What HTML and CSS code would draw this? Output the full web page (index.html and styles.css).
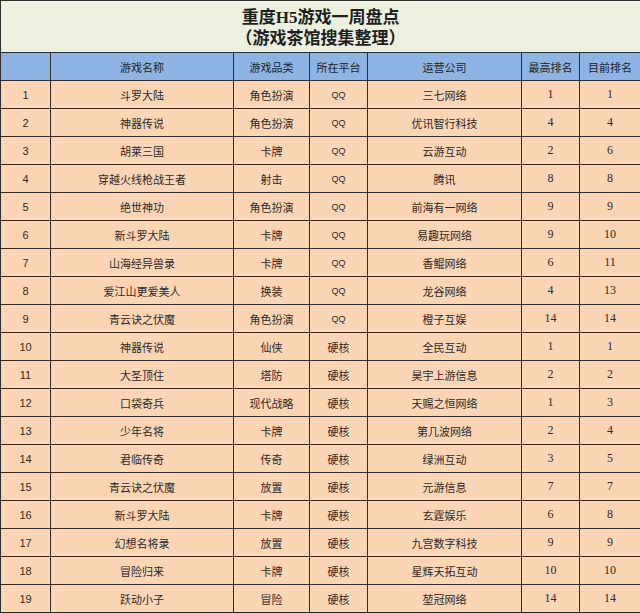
FILE: index.html
```html
<!DOCTYPE html>
<html lang="zh-CN">
<head>
<meta charset="utf-8">
<title>重度H5游戏一周盘点</title>
<link rel="stylesheet" href="styles.css">
</head>
<body>
<table class="sheet">
  <colgroup>
    <col class="c-no"><col class="c-name"><col class="c-type"><col class="c-plat"><col class="c-corp"><col class="c-best"><col class="c-now">
  </colgroup>
  <thead>
    <tr class="title-row"><th colspan="7" class="title">重度H5游戏一周盘点<br>（游戏茶馆搜集整理）</th></tr>
    <tr class="head-row"><th></th><th>游戏名称</th><th>游戏品类</th><th>所在平台</th><th>运营公司</th><th>最高排名</th><th>目前排名</th></tr>
  </thead>
  <tbody>
    <tr><td class="no">1</td><td>斗罗大陆</td><td>角色扮演</td><td class="qq">QQ</td><td>三七网络</td><td class="num">1</td><td class="num">1</td></tr>
    <tr><td class="no">2</td><td>神器传说</td><td>角色扮演</td><td class="qq">QQ</td><td>优讯智行科技</td><td class="num">4</td><td class="num">4</td></tr>
    <tr><td class="no">3</td><td>胡莱三国</td><td>卡牌</td><td class="qq">QQ</td><td>云游互动</td><td class="num">2</td><td class="num">6</td></tr>
    <tr><td class="no">4</td><td>穿越火线枪战王者</td><td>射击</td><td class="qq">QQ</td><td>腾讯</td><td class="num">8</td><td class="num">8</td></tr>
    <tr><td class="no">5</td><td>绝世神功</td><td>角色扮演</td><td class="qq">QQ</td><td>前海有一网络</td><td class="num">9</td><td class="num">9</td></tr>
    <tr><td class="no">6</td><td>新斗罗大陆</td><td>卡牌</td><td class="qq">QQ</td><td>易趣玩网络</td><td class="num">9</td><td class="num">10</td></tr>
    <tr><td class="no">7</td><td>山海经异兽录</td><td>卡牌</td><td class="qq">QQ</td><td>香鲲网络</td><td class="num">6</td><td class="num">11</td></tr>
    <tr><td class="no">8</td><td>爱江山更爱美人</td><td>换装</td><td class="qq">QQ</td><td>龙谷网络</td><td class="num">4</td><td class="num">13</td></tr>
    <tr><td class="no">9</td><td>青云诀之伏魔</td><td>角色扮演</td><td class="qq">QQ</td><td>橙子互娱</td><td class="num">14</td><td class="num">14</td></tr>
    <tr><td class="no">10</td><td>神器传说</td><td>仙侠</td><td>硬核</td><td>全民互动</td><td class="num">1</td><td class="num">1</td></tr>
    <tr><td class="no">11</td><td>大圣顶住</td><td>塔防</td><td>硬核</td><td>昊宇上游信息</td><td class="num">2</td><td class="num">2</td></tr>
    <tr><td class="no">12</td><td>口袋奇兵</td><td>现代战略</td><td>硬核</td><td>天赐之恒网络</td><td class="num">1</td><td class="num">3</td></tr>
    <tr><td class="no">13</td><td>少年名将</td><td>卡牌</td><td>硬核</td><td>第几波网络</td><td class="num">2</td><td class="num">4</td></tr>
    <tr><td class="no">14</td><td>君临传奇</td><td>传奇</td><td>硬核</td><td>绿洲互动</td><td class="num">3</td><td class="num">5</td></tr>
    <tr><td class="no">15</td><td>青云诀之伏魔</td><td>放置</td><td>硬核</td><td>元游信息</td><td class="num">7</td><td class="num">7</td></tr>
    <tr><td class="no">16</td><td>新斗罗大陆</td><td>卡牌</td><td>硬核</td><td>玄霆娱乐</td><td class="num">6</td><td class="num">8</td></tr>
    <tr><td class="no">17</td><td>幻想名将录</td><td>放置</td><td>硬核</td><td>九宫数字科技</td><td class="num">9</td><td class="num">9</td></tr>
    <tr><td class="no">18</td><td>冒险归来</td><td>卡牌</td><td>硬核</td><td>星辉天拓互动</td><td class="num">10</td><td class="num">10</td></tr>
    <tr><td class="no">19</td><td>跃动小子</td><td>冒险</td><td>硬核</td><td>堃冠网络</td><td class="num">14</td><td class="num">14</td></tr>
  </tbody>
</table>
</body>
</html>
```
FILE: styles.css
```css
html, body {
  margin: 0;
  padding: 0;
  background: #c4c4c4;
}
.sheet {
  width: 640px;
  border-collapse: collapse;
  table-layout: fixed;
  font-family: "Liberation Sans", "Noto Sans CJK SC", sans-serif;
  font-size: 11px;
  color: #2a2a2a;
}
.c-no { width: 50px; }
.c-name { width: 183px; }
.c-type { width: 76px; }
.c-plat { width: 58px; }
.c-corp { width: 154px; }
.c-best { width: 58px; }
.c-now { width: 61px; }
.sheet th, .sheet td {
  border: 1px solid #2e2e2e;
  padding: 0;
  text-align: center;
  vertical-align: middle;
  font-weight: normal;
  overflow: hidden;
  white-space: nowrap;
}
.title-row { height: 52px; }
.sheet .title {
  background: #ebf1de;
  font-family: "Liberation Serif", "Noto Sans CJK SC", serif;
  font-weight: 700;
  font-size: 17px;
  line-height: 21px;
  color: #1e1e1e;
  padding-top: 2px;
}
.head-row { height: 28px; }
.head-row th {
  background: #8db4e2;
  color: #222;
  font-size: 11px;
}
tbody tr { height: 28px; }
tbody td { background: #fcd5b4; }
.qq { font-size: 9px; }
.num { font-family: "Liberation Serif", "Noto Sans CJK SC", serif; font-size: 12px; }
```
